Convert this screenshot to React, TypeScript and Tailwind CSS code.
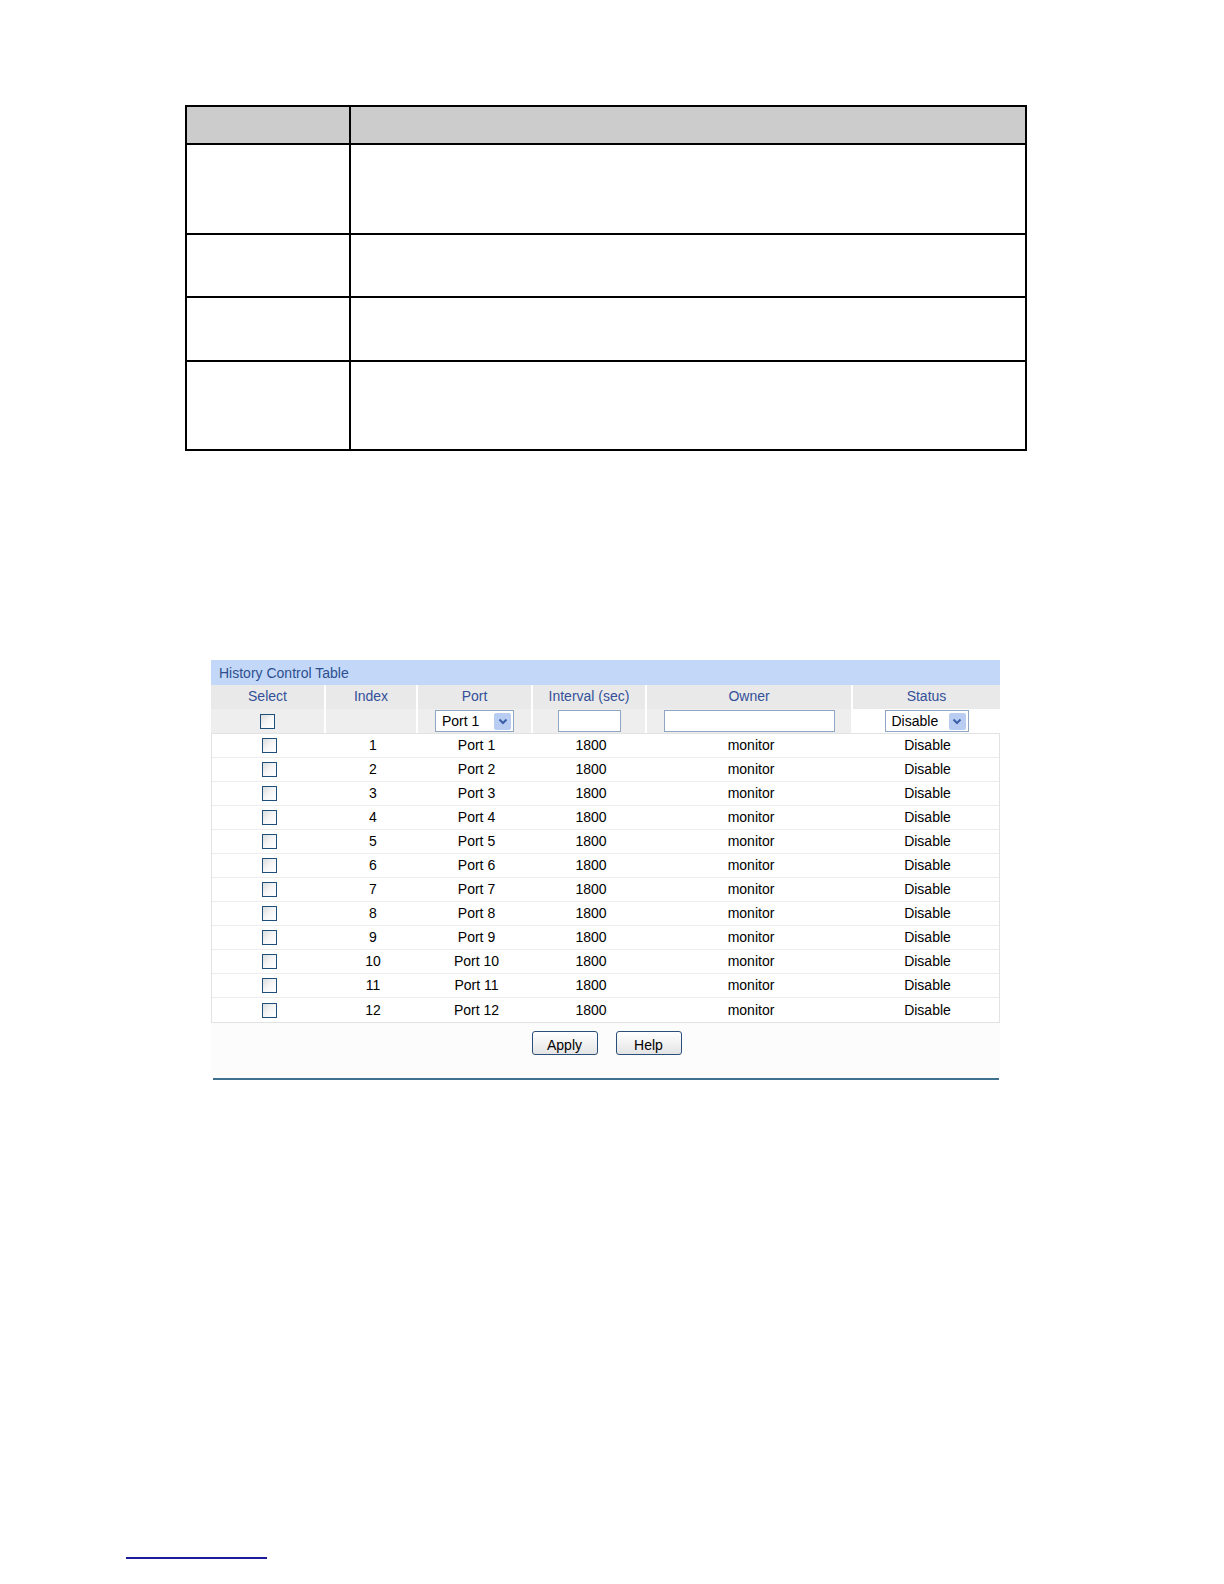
import React from "react";

const font = { fontFamily: '"Liberation Sans", Arial, sans-serif' };

const ports = Array.from({ length: 12 }, (_, i) => i + 1);

function Checkbox() {
  return (
    <span className="inline-block w-[15px] h-[15px] border border-[#1f4f7a] bg-gradient-to-br from-[#dcdcdc] via-[#f6f6f6] to-[#ffffff]" />
  );
}

function Chevron() {
  return (
    <span className="flex items-center justify-center w-[17px] h-[17px] bg-[#b9cdf2] rounded-[2px]">
      <svg width="10" height="7" viewBox="0 0 10 7">
        <path d="M1.5 1.5 L5 5 L8.5 1.5" fill="none" stroke="#3a5fa8" strokeWidth="2" />
      </svg>
    </span>
  );
}

function FakeSelect({ label, width }: { label: string; width: string }) {
  return (
    <div
      className={`${width} h-[22px] border border-[#8ea6c4] bg-white flex items-center justify-between pl-[6px] pr-[2px] text-[14px] text-black`}
    >
      <span>{label}</span>
      <Chevron />
    </div>
  );
}

const cols = "grid grid-cols-[115px_92px_115px_114px_206px_147px]";

export default function App() {
  return (
    <div className="w-full h-[1584px] bg-white relative overflow-hidden" style={font}>
      {/* description table */}
      <div className="pt-[105px] pl-[185px]">
        <div className="w-[842px] border-2 border-black grid grid-cols-[164px_1fr]">
          <div className="h-[38px] bg-[#cccccc] border-r-2 border-b-2 border-black" />
          <div className="h-[38px] bg-[#cccccc] border-b-2 border-black" />
          <div className="h-[90px] border-r-2 border-b-2 border-black" />
          <div className="h-[90px] border-b-2 border-black" />
          <div className="h-[63px] border-r-2 border-b-2 border-black" />
          <div className="h-[63px] border-b-2 border-black" />
          <div className="h-[64px] border-r-2 border-b-2 border-black" />
          <div className="h-[64px] border-b-2 border-black" />
          <div className="h-[87px] border-r-2 border-black" />
          <div className="h-[87px]" />
        </div>
      </div>

      {/* History Control Table panel */}
      <div className="mt-[209px] ml-[211px] w-[789px]">
        <div className="h-[25px] bg-[#c3d8f8] text-[#2d4f8f] text-[14px] pl-[8px] leading-[26px]">
          History Control Table
        </div>
        <div className={`${cols} bg-[#e9e9e9] text-[#34509a] text-[14px]`}>
          {["Select", "Index", "Port", "Interval (sec)", "Owner", "Status"].map((h, i) => (
            <div
              key={h}
              className={`h-[24px] leading-[23px] text-center ${i < 5 ? "border-r-2 border-white" : ""}`}
            >
              {h}
            </div>
          ))}
        </div>
        <div className={`${cols} bg-[#eeeeee] h-[25px] items-center border-b border-[#e2e2e2]`}>
          <div className="flex justify-center border-r-2 border-white h-full items-center">
            <Checkbox />
          </div>
          <div className="border-r-2 border-white h-full" />
          <div className="flex justify-center border-r-2 border-white h-full items-center">
            <FakeSelect label="Port 1" width="w-[79px]" />
          </div>
          <div className="flex justify-center border-r-2 border-white h-full items-center">
            <div className="w-[63px] h-[22px] border border-[#8ea6c4] bg-white" />
          </div>
          <div className="flex justify-center border-r-2 border-white h-full items-center">
            <div className="w-[171px] h-[22px] border border-[#8ea6c4] bg-white" />
          </div>
          <div className="flex justify-center h-full items-center bg-white">
            <FakeSelect label="Disable" width="w-[84px]" />
          </div>
        </div>
        <div className="border-x border-b border-[#e2e2e2] text-[14px] text-black">
          {ports.map((n) => (
            <div key={n} className={`${cols} h-[24px] items-center border-b border-[#ececec] last:border-b-0`}>
              <div className="flex justify-center">
                <Checkbox />
              </div>
              <div className="text-center">{n}</div>
              <div className="text-center">Port {n}</div>
              <div className="text-center">1800</div>
              <div className="text-center">monitor</div>
              <div className="text-center">Disable</div>
            </div>
          ))}
        </div>
        <div className="h-[55px] bg-[#fcfcfc] flex justify-center gap-[18px] pt-[8px] pl-[2px]">
          <button className="w-[66px] h-[24px] border border-[#2b4f78] rounded-[3px] bg-gradient-to-b from-white to-[#e4e4e4] text-[14px] leading-[26px] text-black">
            Apply
          </button>
          <button className="w-[66px] h-[24px] border border-[#2b4f78] rounded-[3px] bg-gradient-to-b from-white to-[#e4e4e4] text-[14px] leading-[26px] text-black">
            Help
          </button>
        </div>
        <div className="ml-[2px] w-[786px] h-[2px] bg-[#3f7090]" />
      </div>

      {/* footnote rule */}
      <div className="absolute left-[126px] top-[1557px] w-[141px] h-[2px] bg-[#1b1b9c]" />
    </div>
  );
}
